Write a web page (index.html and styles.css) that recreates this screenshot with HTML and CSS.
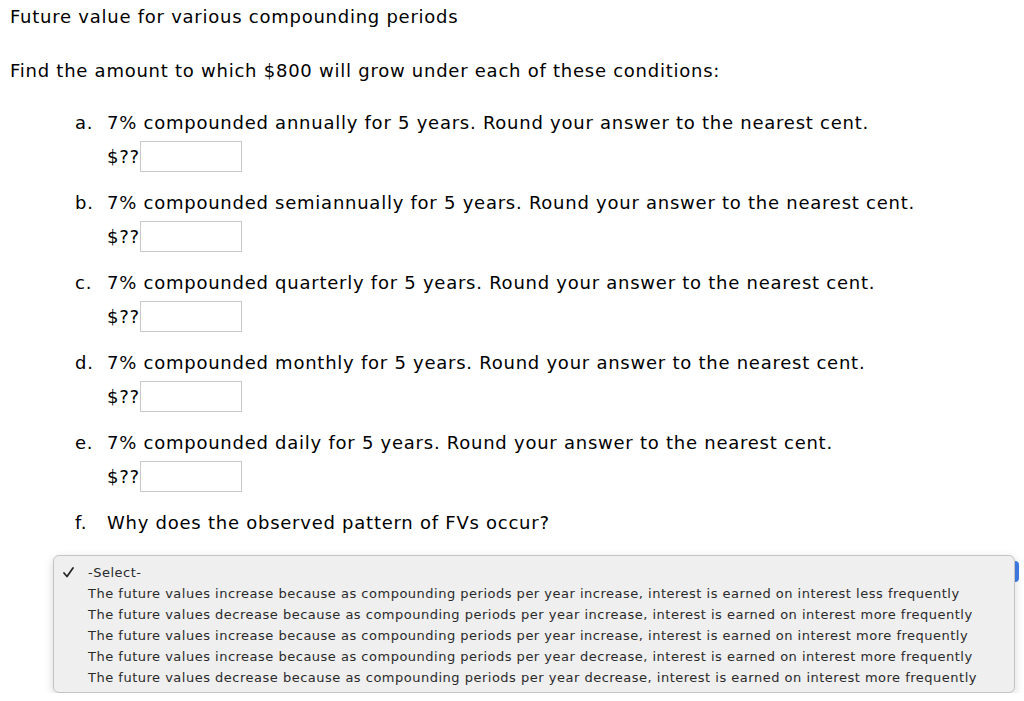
FILE: index.html
```html
<!DOCTYPE html>
<html>
  <head>
    <title>Future value for various compounding periods</title>
    <link rel="stylesheet" href="styles.css">
  </head>
  <body>
    <div class="question">
      <p class="title">Future value for various compounding periods</p>
      <p class="intro">Find the amount to which $800 will grow under each of these conditions:</p>

      <div class="part">
        <div class="part-text"><span class="label">a.</span>7% compounded annually for 5 years. Round your answer to the nearest cent.</div>
        <div class="answer">$??<input class="answer-box" type="text"></div>
      </div>

      <div class="part">
        <div class="part-text"><span class="label">b.</span>7% compounded semiannually for 5 years. Round your answer to the nearest cent.</div>
        <div class="answer">$??<input class="answer-box" type="text"></div>
      </div>

      <div class="part">
        <div class="part-text"><span class="label">c.</span>7% compounded quarterly for 5 years. Round your answer to the nearest cent.</div>
        <div class="answer">$??<input class="answer-box" type="text"></div>
      </div>

      <div class="part">
        <div class="part-text"><span class="label">d.</span>7% compounded monthly for 5 years. Round your answer to the nearest cent.</div>
        <div class="answer">$??<input class="answer-box" type="text"></div>
      </div>

      <div class="part">
        <div class="part-text"><span class="label">e.</span>7% compounded daily for 5 years. Round your answer to the nearest cent.</div>
        <div class="answer">$??<input class="answer-box" type="text"></div>
      </div>

      <div class="part last">
        <div class="part-text"><span class="label">f.</span>Why does the observed pattern of FVs occur?</div>
      </div>

      <div class="select-wrap">
        <span class="select-edge"></span>
        <ul class="menu">
          <li class="option selected">
            <svg class="check" width="11" height="11" viewBox="0 0 11 11">
              <path d="M1 6 L4 9.5 L10 1" fill="none" stroke="#222" stroke-width="1.7" stroke-linecap="round" stroke-linejoin="round"/>
            </svg>-Select-
          </li>
          <li class="option">The future values increase because as compounding periods per year increase, interest is earned on interest less frequently</li>
          <li class="option">The future values decrease because as compounding periods per year increase, interest is earned on interest more frequently</li>
          <li class="option">The future values increase because as compounding periods per year increase, interest is earned on interest more frequently</li>
          <li class="option">The future values increase because as compounding periods per year decrease, interest is earned on interest more frequently</li>
          <li class="option">The future values decrease because as compounding periods per year decrease, interest is earned on interest more frequently</li>
        </ul>
      </div>
    </div>
  </body>
</html>
```

FILE: styles.css
```css
body {
  margin: 0;
  background-color: white;
  color: black;
  font-family: "DejaVu Sans", Verdana, sans-serif;
  font-size: 18px;
  letter-spacing: 0.75px;
}
.question {
  padding: 5px 0 0 10px;
}
.title {
  margin: 0 0 30px 0;
  line-height: 24px;
}
.intro {
  margin: 0 0 28px 0;
  line-height: 24px;
}
.part {
  margin-left: 65px;
  margin-bottom: 19px;
}
.part.last {
  margin-bottom: 20px;
}
.part-text {
  line-height: 24px;
}
.label {
  display: inline-block;
  width: 32px;
}
.answer {
  margin-top: 6px;
  margin-left: 32px;
  display: flex;
  align-items: center;
  height: 31px;
}
.answer-box {
  box-sizing: border-box;
  width: 102px;
  height: 31px;
  border: 1px solid #c8c8c8;
  margin: 0;
  padding: 0;
}
.select-wrap {
  position: relative;
  margin-left: 43px;
  width: 962px;
}
.select-edge {
  position: absolute;
  right: -4px;
  top: 6px;
  width: 8px;
  height: 21px;
  border-radius: 4px;
  background-color: #3f7ee8;
}
.menu {
  position: relative;
  list-style: none;
  margin: 0;
  padding: 6px 0;
  box-sizing: border-box;
  height: 138px;
  background-color: #efefef;
  border: 1px solid #c4c4c4;
  border-radius: 6px;
  box-shadow: 0 3px 10px rgba(0, 0, 0, 0.16);
  color: #2a2a2a;
  font-size: 13px;
  letter-spacing: 0.5px;
}
.option {
  position: relative;
  line-height: 21px;
  padding-left: 34px;
  white-space: nowrap;
}
.check {
  position: absolute;
  left: 9px;
  top: 5px;
}
```
